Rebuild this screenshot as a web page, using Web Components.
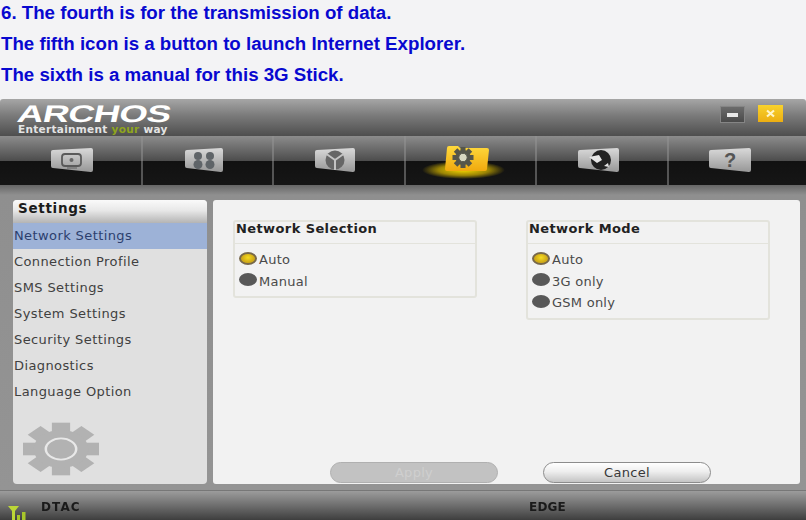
<!DOCTYPE html>
<html>
<head>
<meta charset="utf-8">
<title>Archos 3G Stick</title>
<style>
  html, body { margin: 0; padding: 0; height: 520px; overflow: hidden; background: #f3f3f5; }
</style>
</head>
<body>
<intro-text>
  <p>6. The fourth is for the transmission of data.</p>
  <p>The fifth icon is a button to launch Internet Explorer.</p>
  <p>The sixth is a manual for this 3G Stick.</p>
</intro-text>
<archos-window>
  <title-bar></title-bar>
  <nav-bar>
    <nav-tab icon="screen"></nav-tab>
    <nav-tab icon="people"></nav-tab>
    <nav-tab icon="spokes"></nav-tab>
    <nav-tab icon="gear" active></nav-tab>
    <nav-tab icon="globe"></nav-tab>
    <nav-tab icon="help"></nav-tab>
  </nav-bar>
  <settings-menu></settings-menu>
  <settings-panel>
    <option-group title="Network Selection" style="height:78px">
      <radio-option checked>Auto</radio-option>
      <radio-option>Manual</radio-option>
    </option-group>
    <option-group title="Network Mode" style="height:100px">
      <radio-option checked>Auto</radio-option>
      <radio-option>3G only</radio-option>
      <radio-option>GSM only</radio-option>
    </option-group>
    <pill-button slot="actions" disabled>Apply</pill-button>
    <pill-button slot="actions">Cancel</pill-button>
  </settings-panel>
  <status-bar></status-bar>
</archos-window>

<script>
const gear = (cx, cy, r, fill, hole, ring, ringW) => {
  let teeth = '';
  for (let a = 0; a < 360; a += 45) {
    teeth += `<rect x="${cx - r * 0.24}" y="${cy - r}" width="${r * 0.48}" height="${r * 0.5}" fill="${fill}" transform="rotate(${a} ${cx} ${cy})"/>`;
  }
  return `${teeth}<circle cx="${cx}" cy="${cy}" r="${r * 0.72}" fill="${fill}"/>
    <circle cx="${cx}" cy="${cy}" r="${r * 0.4}" fill="${hole}" stroke="${ring}" stroke-width="${ringW}"/>`;
};

class IntroText extends HTMLElement {
  constructor() {
    super();
    this.attachShadow({ mode: 'open' });
    this.shadowRoot.innerHTML = `
      <style>
        :host { display: block; height: 99px; overflow: hidden; box-sizing: border-box; padding-left: 1px; }
        div { margin-top: -3px; font: bold 18.700px/31px "Liberation Sans", Arial, sans-serif; color: #0808d0; }
        ::slotted(p) { margin: 0; white-space: nowrap; }
      </style>
      <div><slot></slot></div>`;
  }
}

class ArchosWindow extends HTMLElement {
  constructor() {
    super();
    this.attachShadow({ mode: 'open' });
    this.shadowRoot.innerHTML = `
      <style>
        :host {
          display: flex; flex-direction: column; height: 421px;
          font-family: "DejaVu Sans", Verdana, sans-serif;
          filter: blur(0.5px);
        }
        .body {
          flex: 1; min-height: 0; display: flex; gap: 6px; box-sizing: border-box;
          padding: 15px 6px 6px 13px;
          background: linear-gradient(#666 0, #8f8f8f 10px, #949494 100%);
        }
      </style>
      <slot name="top"></slot>
      <slot name="nav"></slot>
      <div class="body">
        <slot name="side"></slot>
        <slot name="main"></slot>
      </div>
      <slot name="bottom"></slot>`;
  }
  connectedCallback() {
    for (const el of this.children) {
      const tag = el.tagName.toLowerCase();
      if (tag === 'title-bar') el.slot = 'top';
      if (tag === 'nav-bar') el.slot = 'nav';
      if (tag === 'settings-menu') el.slot = 'side';
      if (tag === 'settings-panel') el.slot = 'main';
      if (tag === 'status-bar') el.slot = 'bottom';
    }
  }
}

class TitleBar extends HTMLElement {
  constructor() {
    super();
    this.attachShadow({ mode: 'open' });
    this.shadowRoot.innerHTML = `
      <style>
        :host {
          display: flex; align-items: flex-start; height: 37px; box-sizing: border-box;
          padding: 6px 23px 0 18px; border-radius: 3px 3px 0 0;
          background: linear-gradient(#a6a6a6, #7a7a7a 45%, #4e4e4e);
        }
        .logo { width: 154px; color: #fff; overflow: visible; }
        .name {
          display: block; height: 19px; margin-top: -2px; font: bold 24px/21px "Liberation Sans", Arial, sans-serif;
          transform: scaleX(1.52) skewX(-8deg); transform-origin: 0 50%; letter-spacing: -0.6px;
        }
        .tag { display: block; font: bold 10.500px/11px "DejaVu Sans", sans-serif; white-space: nowrap; color: #e4e4e4; margin-top: 2px; letter-spacing: .3px; }
        .tag i { color: #8fa51c; font-style: normal; }
        .ctl { display: flex; margin-left: auto; gap: 13px; }
        .min, .close { width: 25px; height: 17px; display: flex; align-items: center; justify-content: center; }
        .min { background: linear-gradient(#6b6b6b, #4a4a4a); border: 1px solid #858585; box-sizing: border-box; margin-top: 1px; }
        .min b { width: 11px; height: 4px; background: #e8e8e8; }
        .close { background: linear-gradient(#f8d22c, #ecae12); }
      </style>
      <div class="logo">
        <span class="name">ARCHOS</span>
        <span class="tag">Entertainment <i>your</i> way</span>
      </div>
      <div class="ctl">
        <div class="min"><b></b></div>
        <div class="close">
          <svg width="11" height="9" viewBox="0 0 11 9"><path d="M2 1.500l7 6M9 1.500l-7 6" stroke="#fff6c8" stroke-width="2.200"/></svg>
        </div>
      </div>`;
  }
}

class NavBar extends HTMLElement {
  constructor() {
    super();
    this.attachShadow({ mode: 'open' });
    this.shadowRoot.innerHTML = `
      <style>
        :host {
          display: flex; height: 49px; box-sizing: border-box; padding: 0 8px 0 11px;
          background: linear-gradient(#8c8c8c 0, #4c4c4c 25px, #111 25px, #161616 100%);
        }
      </style>
      <slot></slot>`;
  }
}

const tabIcons = {
  screen: { w: 44, shape: `<rect x="12" y="7" width="19" height="12" rx="3" fill="none" stroke="#5a5a5a" stroke-width="1.800"/>
    <circle cx="21.500" cy="13" r="2" fill="#666"/><path d="M17 21h10" stroke="#777" stroke-width="1.500"/>` },
  people: { w: 40, shape: `<g fill="#5f6468"><circle cx="14" cy="9" r="4"/><circle cx="26" cy="9" r="4"/>
    <circle cx="14" cy="17.500" r="4.500"/><circle cx="26" cy="17.500" r="4.500"/></g>` },
  spokes: { w: 42, shape: `<circle cx="21" cy="13" r="9.500" fill="#666"/>
    <path d="M21 13V23M21 13l-8.500-6M21 13l8.500-6" stroke="#c4c4c4" stroke-width="2"/>` },
  globe: { w: 43, shape: `<circle cx="24" cy="13" r="10" fill="#222"/>
    <path d="M12 10l10-2 3 5-5 3zM27 19l4-3 1 4z" fill="#e6e6e6"/>` },
  help: { w: 44, shape: `<text x="22" y="20" text-anchor="middle" font-family="Liberation Sans, sans-serif" font-weight="bold" font-size="20" fill="#555">?</text>` }
};

class NavTab extends HTMLElement {
  constructor() {
    super();
    this.attachShadow({ mode: 'open' });
  }
  connectedCallback() {
    const name = this.getAttribute('icon');
    let art;
    if (name === 'gear') {
      art = `<svg class="folder" width="46" height="28" viewBox="0 0 46 28">
        <defs><linearGradient id="y" x1="0" y1="0" x2="0" y2="1"><stop offset="0" stop-color="#ffd93c"/><stop offset="1" stop-color="#f0a90e"/></linearGradient></defs>
        <path d="M5 2h9l2 2h27q2 0 2 2l-2 19q0 2-2 2H3q-2 0-2-2L3 4q0-2 2-2z" fill="url(#y)"/>
        ${gear(19, 13.500, 10.500, '#55564a', '#d8d8c0', '#55564a', 1)}
      </svg>`;
    } else {
      const icon = tabIcons[name];
      const w = icon.w;
      art = `<svg width="${w}" height="26" viewBox="0 0 ${w} 26">
        <defs><linearGradient id="c" x1="0" y1="0" x2="0" y2="1"><stop offset="0" stop-color="#d4d4d4"/><stop offset="1" stop-color="#9c9c9c"/></linearGradient></defs>
        <path d="M3 5L${w - 3} 3V23L3 19z" fill="url(#c)" stroke="url(#c)" stroke-width="4" stroke-linejoin="round"/>
        ${icon.shape}
      </svg>`;
    }
    this.shadowRoot.innerHTML = `
      <style>
        :host {
          display: flex; flex: 1; position: relative; justify-content: center; align-items: flex-start;
          padding: 11px 7px 0 0; box-sizing: border-box;
          border-right: 2px solid rgba(150,150,150,.5);
        }
        :host(:last-child) { border-right: 0; }
        :host([active])::before {
          content: ""; position: absolute; left: 16px; right: 30px; top: 25px; height: 18px; border-radius: 50%;
          background: radial-gradient(closest-side, #f8d800, rgba(200,170,0,.75) 60%, rgba(120,100,0,0));
        }
        svg { position: relative; display: block; }
        svg.folder { margin-top: -3px; }
      </style>
      ${art}`;
  }
}

class SettingsMenu extends HTMLElement {
  constructor() {
    super();
    this.attachShadow({ mode: 'open' });
    const items = ['Network Settings', 'Connection Profile', 'SMS Settings', 'System Settings', 'Security Settings', 'Diagnostics', 'Language Option'];
    this.shadowRoot.innerHTML = `
      <style>
        :host {
          display: flex; flex-direction: column; width: 194px; height: 100%; box-sizing: border-box;
          border-radius: 4px; background: #e0e0e0; overflow: hidden;
        }
        h2 {
          margin: 0; height: 23px; padding: 0 0 0 5px; font: bold 13.500px/16px "DejaVu Sans", sans-serif; letter-spacing: .7px; color: #1c1c1c;
          background: linear-gradient(#fafafa, #e8e8e8 45%, #b4b4b4);
        }
        ul { list-style: none; margin: 0; padding: 0; }
        li { height: 26px; padding-left: 1px; font-size: 13px; line-height: 26px; letter-spacing: .4px; color: #404040; white-space: nowrap; }
        li.on { background: #9db2d7; color: #2c3f6e; }
        svg { margin: auto 0 8px 9px; display: block; }
      </style>
      <h2>Settings</h2>
      <ul>${items.map((t, i) => `<li class="${i ? '' : 'on'}">${t}</li>`).join('')}</ul>
      <svg width="78" height="54" viewBox="0 0 78 78" preserveAspectRatio="none">${gear(39, 39, 38, '#b2b2b2', '#b2b2b2', '#e8e8e8', 2.500)}</svg>`;
  }
}

class SettingsPanel extends HTMLElement {
  constructor() {
    super();
    this.attachShadow({ mode: 'open' });
    this.shadowRoot.innerHTML = `
      <style>
        :host {
          display: flex; flex-direction: column; flex: 1; min-width: 0; box-sizing: border-box;
          padding: 20px 30px 1px 20px; background: #f2f2f2; border-radius: 3px;
        }
        .groups { flex: 1; display: flex; align-items: flex-start; justify-content: space-between; }
        .actions { display: flex; gap: 45px; padding-left: 97px; }
      </style>
      <div class="groups"><slot></slot></div>
      <div class="actions"><slot name="actions"></slot></div>`;
  }
}

class OptionGroup extends HTMLElement {
  constructor() {
    super();
    this.attachShadow({ mode: 'open' });
  }
  connectedCallback() {
    this.shadowRoot.innerHTML = `
      <style>
        :host {
          display: block; width: 244px; box-sizing: border-box;
          border: 2px solid #e3e3dc; border-radius: 3px;
        }
        h3 {
          margin: 0; height: 21px; padding-left: 1px; border-bottom: 1px solid #e3e3dc; box-sizing: content-box;
          font: bold 13px/14px "DejaVu Sans", sans-serif; letter-spacing: .4px; color: #222;
        }
        div { padding-top: 5px; display: flex; flex-direction: column; gap: 0; }
      </style>
      <h3>${this.getAttribute('title')}</h3>
      <div><slot></slot></div>`;
    this.removeAttribute('title');
  }
}

class RadioOption extends HTMLElement {
  constructor() {
    super();
    this.attachShadow({ mode: 'open' });
    this.shadowRoot.innerHTML = `
      <style>
        :host {
          display: flex; align-items: center; height: 21.500px; padding-left: 4px;
          font-size: 13px; letter-spacing: .25px; color: #4a4a4a; white-space: nowrap;
        }
        i { width: 18px; height: 13px; border-radius: 50%; background: #585858; flex: none; margin: -3px 2px 0 0; }
        :host([checked]) i {
          background: radial-gradient(ellipse at 50% 40%, #f6dc20, #d0aa18 60%); box-sizing: border-box;
          border: 2px solid #77684a;
        }
      </style>
      <i></i><slot></slot>`;
  }
}

class PillButton extends HTMLElement {
  constructor() {
    super();
    this.attachShadow({ mode: 'open' });
    this.shadowRoot.innerHTML = `
      <style>
        :host {
          display: flex; align-items: center; justify-content: center;
          width: 168px; height: 21px; box-sizing: border-box; border-radius: 11px;
          border: 1px solid #8c8c8c; font-size: 13px; letter-spacing: .3px; color: #383838;
          background: linear-gradient(#ffffff, #eeeeee 45%, #c4c4c4);
        }
        :host([disabled]) { background: #c2c2c2; border-color: #b0b0b0; color: #cfcfcf; }
      </style>
      <slot></slot>`;
  }
}

class StatusBar extends HTMLElement {
  constructor() {
    super();
    this.attachShadow({ mode: 'open' });
    this.shadowRoot.innerHTML = `
      <style>
        :host {
          display: flex; align-items: center; height: 30px; box-sizing: border-box; padding: 3px 0 0 8px;
          border-top: 1px solid #777; font: bold 12px "DejaVu Sans", sans-serif; color: #1a1a1a;
          background: linear-gradient(#9c9c9c, #6e6e6e 50%, #3e3e3e);
        }
        svg { margin-top: 10px; width: 20px; height: 17px; }
        .op { margin-left: 13px; width: 488px; letter-spacing: 1.100px; }
        .net { letter-spacing: .2px; }
      </style>
      <svg viewBox="0 0 20 17">
        <path d="M0 2h11L7 7v9H4V7z" fill="#bcd636"/>
        <path d="M9 11h3v5H9zM14 8h3.500v8H14z" fill="#a8c62a"/>
      </svg>
      <span class="op">DTAC</span>
      <span class="net">EDGE</span>`;
  }
}

customElements.define('intro-text', IntroText);
customElements.define('archos-window', ArchosWindow);
customElements.define('title-bar', TitleBar);
customElements.define('nav-bar', NavBar);
customElements.define('nav-tab', NavTab);
customElements.define('settings-menu', SettingsMenu);
customElements.define('settings-panel', SettingsPanel);
customElements.define('option-group', OptionGroup);
customElements.define('radio-option', RadioOption);
customElements.define('pill-button', PillButton);
customElements.define('status-bar', StatusBar);
</script>
</body>
</html>
